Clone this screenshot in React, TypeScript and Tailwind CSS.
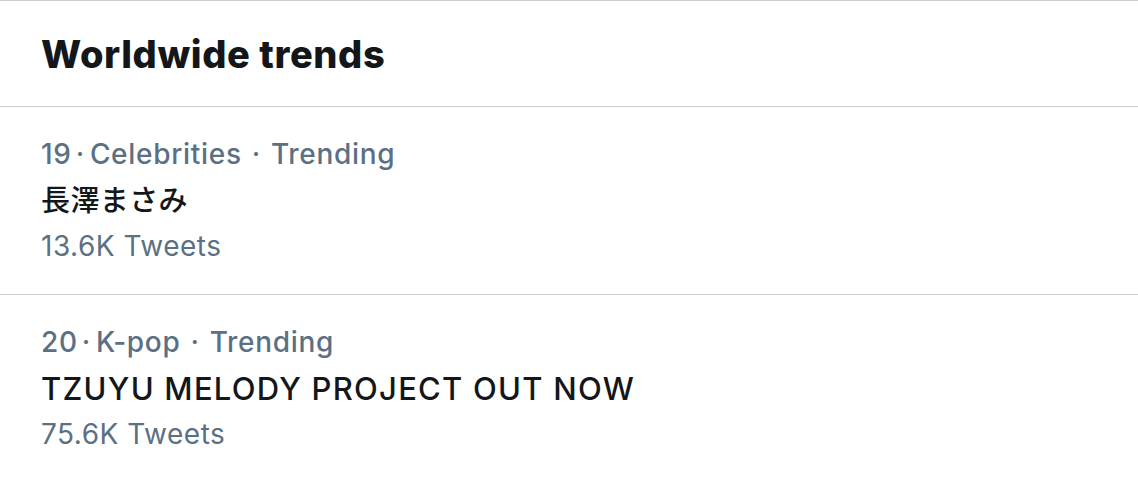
const trends = [
  {
    rank: 19,
    category: 'Celebrities',
    name: '長澤まさみ',
    nameClass: 'text-[29px] tracking-[0.4px]',
    count: '13.6K Tweets',
  },
  {
    rank: 20,
    category: 'K-pop',
    name: 'TZUYU MELODY PROJECT OUT NOW',
    nameClass: 'text-[31px] tracking-[1.25px]',
    count: '75.6K Tweets',
  },
];

export default function App() {
  return (
    <div
      className="min-h-screen w-[1138px] bg-white border-t border-[#cdcdd1] text-[#14171a]"
      style={{ fontFamily: 'Inter, "Noto Sans CJK JP", sans-serif' }}
    >
      <div className="h-[106px] flex items-center px-[41px] border-b border-[#cdcdd1]">
        <h2 className="text-[38px] font-extrabold tracking-[0.6px] leading-none pt-[1px]">Worldwide trends</h2>
      </div>
      {trends.map((t) => (
        <div key={t.rank} className="px-[41px] pt-[24px] pb-[25px] border-b border-[#cdcdd1] last:border-b-0">
          <div className="text-[28px] leading-[46px] text-[#5b7083] font-medium tracking-[0.7px]">
            {t.rank}
            <span className="ml-[4px] mr-[5px]">·</span>
            {t.category}
            <span className="mx-[10px]">·</span>
            Trending
          </div>
          <div className={`${t.nameClass} leading-[44px] font-medium pt-[2px]`}>{t.name}</div>
          <div className="text-[28px] leading-[46px] text-[#5b7083] tracking-[0.5px]">{t.count}</div>
        </div>
      ))}
    </div>
  );
}
